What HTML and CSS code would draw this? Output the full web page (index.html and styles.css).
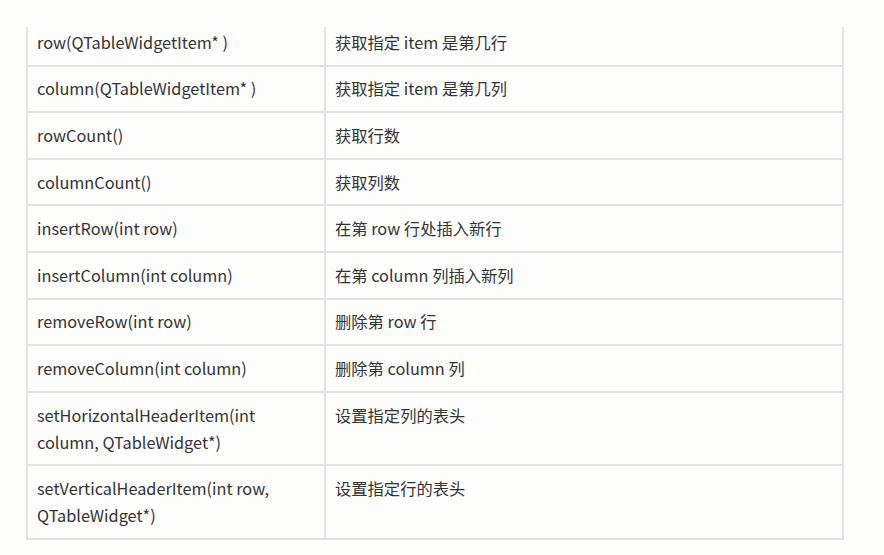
FILE: index.html
```html
<!DOCTYPE html>
<html lang="zh">
<head>
<meta charset="utf-8">
<title>QTableWidget</title>
<link rel="stylesheet" href="styles.css">
</head>
<body>
<div class="frame">
  <table class="api">
    <tbody>
      <tr><td class="fn">row(QTableWidgetItem* )</td><td class="desc">获取指定 item 是第几行</td></tr>
      <tr><td class="fn">column(QTableWidgetItem* )</td><td class="desc">获取指定 item 是第几列</td></tr>
      <tr><td class="fn">rowCount()</td><td class="desc">获取行数</td></tr>
      <tr><td class="fn">columnCount()</td><td class="desc">获取列数</td></tr>
      <tr><td class="fn">insertRow(int row)</td><td class="desc">在第 row 行处插入新行</td></tr>
      <tr><td class="fn">insertColumn(int column)</td><td class="desc">在第 column 列插入新列</td></tr>
      <tr><td class="fn">removeRow(int row)</td><td class="desc">删除第 row 行</td></tr>
      <tr><td class="fn">removeColumn(int column)</td><td class="desc">删除第 column 列</td></tr>
      <tr><td class="fn">setHorizontalHeaderItem(int<br>column, QTableWidget*)</td><td class="desc">设置指定列的表头</td></tr>
      <tr><td class="fn">setVerticalHeaderItem(int row,<br>QTableWidget*)</td><td class="desc">设置指定行的表头</td></tr>
    </tbody>
  </table>
</div>
</body>
</html>
```
FILE: styles.css
```css
html, body {
  margin: 0;
  padding: 0;
  background: #fdfdfc;
}
body {
  font-family: "Noto Sans CJK SC", "Noto Sans", sans-serif;
  color: #333333;
  font-size: 16.3px;
}
.frame {
  margin-top: 27px;
  padding-left: 26px;
  overflow: hidden;
  height: 529px;
}
.api {
  margin-top: -9px;
  width: 818px;
  border-collapse: collapse;
  table-layout: fixed;
}
.api td {
  border: 2px solid #e0e2e5;
  padding: 8.8px 10px 8.8px 9px;
  line-height: 27px;
  vertical-align: top;
  text-align: left;
}
.api td.fn {
  width: 277px;
}
.api td.desc {
  padding-left: 9px;
}
```
